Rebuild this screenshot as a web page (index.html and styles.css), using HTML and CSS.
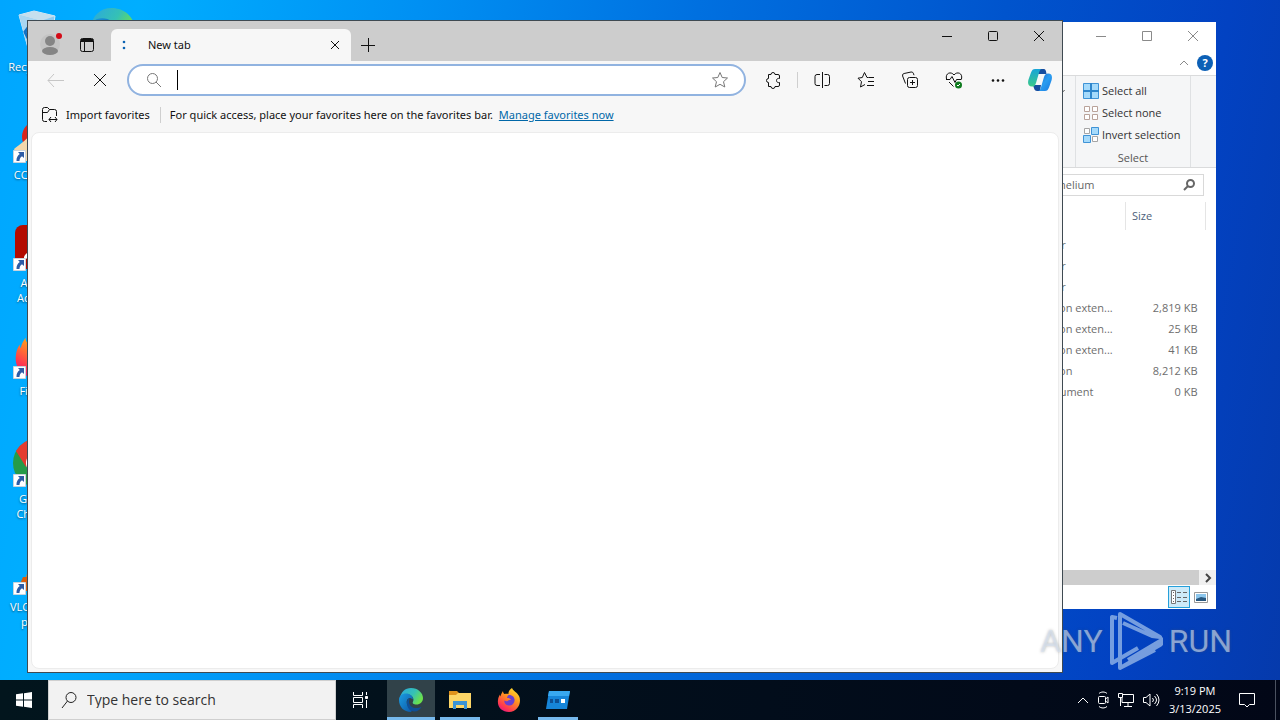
FILE: index.html
```html
<!DOCTYPE html>
<html lang="en">
  <head>
    <meta charset="UTF-8" />
    <meta name="viewport" content="width=device-width, initial-scale=1.0" />
    <title>Desktop</title>
    <link rel="stylesheet" href="styles.css">
  </head>
  <body>
    <svg class="defs" aria-hidden="true">
      <defs>
        <linearGradient id="edgeTop" x1="0" y1="0" x2="1" y2="0.5">
          <stop offset="0" stop-color="#2aa7e0" />
          <stop offset="0.6" stop-color="#35c1b5" />
          <stop offset="1" stop-color="#6be14c" />
        </linearGradient>
        <linearGradient id="edgeBlue" x1="0" y1="0" x2="1" y2="1">
          <stop offset="0" stop-color="#1b9de2" />
          <stop offset="1" stop-color="#0c56a5" />
        </linearGradient>
        <linearGradient id="fox" x1="0.8" y1="0" x2="0.2" y2="1">
          <stop offset="0" stop-color="#ffe22e" />
          <stop offset="0.4" stop-color="#ff9420" />
          <stop offset="0.8" stop-color="#ff3750" />
          <stop offset="1" stop-color="#e31587" />
        </linearGradient>
        <linearGradient id="copA" x1="0" y1="0" x2="0" y2="1">
          <stop offset="0" stop-color="#18a5d8" />
          <stop offset="1" stop-color="#3cc98a" />
        </linearGradient>
        <linearGradient id="copB" x1="0" y1="0" x2="1" y2="1">
          <stop offset="0" stop-color="#1d5fc9" />
          <stop offset="0.5" stop-color="#2a9df0" />
          <stop offset="1" stop-color="#1878e0" />
        </linearGradient>
        <symbol id="edge" viewBox="0 0 24 24">
          <path fill="url(#edgeTop)" d="M1 10C2 4 6 0 12 0c7 0 12 5 12 10 0 4-3 6.500-6.500 6.500-3 0-4.500-1.200-3.500-2.800C16 10 12 6 7.500 6 4.500 6 2 7.500 1 10z" />
          <path fill="url(#edgeBlue)" d="M0 12c0-4 3-6.500 7-6.500 4 0 7 2.500 7 6-1-1-2.500-1.500-3.500-1.500C6 11 6.500 19 14 21.500c-.800.900-1.400 1.500-2 2.500C5 24 0 19 0 12z" />
          <path fill="#0f4f96" d="M10.500 10C6 12 7.500 23.500 15.500 23.500c3 0 5.500-1.800 7-4.500-6 2.500-12 .500-12.500-5 0-1.500.500-3 .500-4z" />
        </symbol>
        <symbol id="firefox" viewBox="0 0 24 24">
          <path fill="url(#fox)" d="M15 0c1 3 5 4 7 8 3 6-1 16-10 16C5 24 0 19 1 12c.300-2.500 1-4 2-5.500 0 1 .200 1.500.500 2C4 6 5 4.500 6 3c0 1.500.500 2.300 1.500 3 1.500-.500 3-.500 4 0C11 4 13 1 15 0z" />
          <path fill="#6a3fd0" d="M12 7c4 0 6 3 5.500 6-.500 3-3 5-6 4.500-3-.400-4.700-3-4-5 1 1 2.500 1 3.500.200 1-.800 2-1 3-1-1-1.500-2.500-1.700-4-1.700C10.500 8 11 7 12 7z" />
        </symbol>
        <symbol id="shortcut" viewBox="0 0 13 13">
          <path fill="#fff" stroke="#c9d3dc" d="M.500.500h12v12H.500z" />
          <path fill="#2d5ca6" d="M5 2h6v6L9 6.200C7 7.500 6.500 9 6.500 11H3.500C3.300 8 4.500 5.500 6.800 4z" />
        </symbol>
      </defs>
    </svg>

    <main class="desktop">
      <div class="shortcuts">
        <div class="shortcut">
          <svg class="shortcut-icon" viewBox="0 0 48 48">
            <path fill="#8ecbf0" stroke="#d6ecf8" d="M6 8l15-4 21 5-5 33-22-1z" />
            <path fill="#c5dfee" d="M6 8l15-4 21 5-14 5z" />
            <path fill="#a9d6f1" d="M6 8l9 34 13-28z" />
            <path fill="none" stroke="#1271c4" stroke-width="3" d="M17 18l-5 7 3 6M15 31h8" />
          </svg>
          <span>Recycle Bin</span>
        </div>
        <div class="shortcut">
          <svg class="shortcut-icon" viewBox="0 0 48 48">
            <circle cx="26" cy="22" r="17" fill="#d8261c" />
            <path fill="#f2d8ac" d="M1 34c6-5 10-7 16-14l12 14-10 12H6z" />
            <use href="#shortcut" y="35" width="13" height="13" />
          </svg>
          <span>CCleaner</span>
        </div>
        <div class="shortcut">
          <svg class="shortcut-icon" viewBox="0 0 48 48">
            <rect x="2" y="2" width="44" height="44" rx="8" fill="#b30b00" />
            <path fill="none" stroke="#fff" stroke-width="3" d="M13 36c-3-4 8-8 13-9s12 3 8 5-12-9-11-19" />
            <use href="#shortcut" y="35" width="13" height="13" />
          </svg>
          <span>Adobe Acrobat</span>
        </div>
        <div class="shortcut">
          <svg class="shortcut-icon" viewBox="0 0 48 48">
            <use href="#firefox" x="1" y="1" width="46" height="46" />
            <use href="#shortcut" y="35" width="13" height="13" />
          </svg>
          <span>Firefox</span>
        </div>
        <div class="shortcut">
          <svg class="shortcut-icon" viewBox="0 0 48 48">
            <circle cx="24" cy="24" r="24" fill="#259b48" />
            <path fill="#e33b2e" d="M3 12A24 24 0 0 1 45 12H24L13 28z" />
            <circle cx="24" cy="24" r="11" fill="#fff" />
            <circle cx="24" cy="24" r="8" fill="#3f7fe8" />
            <use href="#shortcut" y="35" width="13" height="13" />
          </svg>
          <span>Google Chrome</span>
        </div>
        <div class="shortcut">
          <svg class="shortcut-icon" viewBox="0 0 48 48">
            <path fill="#f07c10" d="M21 3h6l11 37H10z" />
            <path fill="#d95d0c" d="M10 30h28l6 14H4z" />
            <use href="#shortcut" y="35" width="13" height="13" />
          </svg>
          <span>VLC media player</span>
        </div>
        <div class="shortcut">
          <svg class="shortcut-icon" viewBox="0 0 48 48"><use href="#edge" x="2" y="1" width="45" height="45" /></svg>
        </div>
        <div class="shortcut">
          <svg class="shortcut-icon" viewBox="0 0 48 48">
            <path fill="#f6f6f6" d="M8 4h23l9 9v33H8z" />
            <path fill="#d0d4d8" d="M31 4l9 9h-9z" />
          </svg>
        </div>
      </div>

      <section class="window explorer">
        <div class="explorer-title">
          <button aria-label="Minimize"><svg width="12" height="12" viewBox="0 0 12 12"><path d="M1 6.500h10" /></svg></button>
          <button aria-label="Maximize"><svg width="12" height="12" viewBox="0 0 12 12"><path d="M1.500 1.500h9v9h-9z" /></svg></button>
          <button aria-label="Close"><svg width="12" height="12" viewBox="0 0 12 12"><path d="M1 1l10 10M11 1L1 11" /></svg></button>
        </div>
        <div class="explorer-menu">
          <button aria-label="Collapse ribbon"><svg width="10" height="8" viewBox="0 0 10 8"><path d="M1 6l4-4 4 4" /></svg></button>
          <button class="help" aria-label="Help">?</button>
        </div>
        <div class="ribbon">
          <svg class="ribbon-arrow" width="6" height="4" viewBox="0 0 6 4"><path d="M0 0h6L3 3z" /></svg>
          <div class="ribbon-group">
            <button>
              <svg width="16" height="16" viewBox="0 0 16 16"><path fill="#a5dafb" stroke="#3f93d6" d="M.500.500h15v15H.500z" /><path stroke="#2f86cc" stroke-width="2" d="M8 0v16M0 8h16" /></svg>
              Select all
            </button>
            <button>
              <svg width="16" height="16" viewBox="0 0 16 16"><path fill="#fff" stroke="#b9a39a" d="M1.500 1.500h5v5h-5zM9.500 1.500h5v5h-5zM1.500 9.500h5v5h-5zM9.500 9.500h5v5h-5z" /></svg>
              Select none
            </button>
            <button>
              <svg width="16" height="16" viewBox="0 0 16 16"><path fill="#fff" stroke="#a5a5a5" d="M1.500 1.500h5v5h-5zM9.500 9.500h5v5h-5z" /><path fill="#a5dafb" stroke="#3f93d6" d="M8.500.500h7v7h-7zM.500 8.500h7v7h-7z" /></svg>
              Invert selection
            </button>
            <p>Select</p>
          </div>
        </div>
        <div class="explorer-address">
          <label class="explorer-search">
            <input type="text" value="helium" aria-label="Search folder">
            <svg width="12" height="12" viewBox="0 0 12 12"><circle cx="7.500" cy="4.500" r="3.500" /><path d="M5 7L1 11" /></svg>
          </label>
        </div>
        <div class="explorer-files">
          <table>
            <thead>
              <tr><th>Type</th><th>Size</th></tr>
            </thead>
            <tbody>
              <tr><td>File folder</td><td></td></tr>
              <tr><td>File folder</td><td></td></tr>
              <tr><td>File folder</td><td></td></tr>
              <tr><td>Application exten...</td><td>2,819 KB</td></tr>
              <tr><td>Application exten...</td><td>25 KB</td></tr>
              <tr><td>Application exten...</td><td>41 KB</td></tr>
              <tr><td>Application</td><td>8,212 KB</td></tr>
              <tr><td>Text Document</td><td>0 KB</td></tr>
            </tbody>
          </table>
        </div>
        <div class="scrollbar">
          <button aria-label="Scroll right"><svg width="8" height="10" viewBox="0 0 8 10"><path d="M2 1l4 4-4 4" /></svg></button>
        </div>
        <div class="explorer-status">
          <button class="active" aria-label="Details view">
            <svg width="16" height="14" viewBox="0 0 16 14"><path fill="#fff" stroke="#777" d="M.500.500h4v13h-4z" /><path stroke="#666" stroke-dasharray="4 2" d="M6 2.500h10M6 7.500h10M6 11.500h10" /><path stroke="#666" stroke-dasharray="1 2" d="M2.500 2v10" /></svg>
          </button>
          <button aria-label="Thumbnail view">
            <svg width="14" height="11" viewBox="0 0 14 11"><path fill="#fff" stroke="#999" d="M.500.500h13v10H.500z" /><g stroke="none"><path fill="#8cc6ec" d="M2 2h10v7H2z" /><path fill="#28577e" d="M2 7l5-2 5 1v3H2z" /></g></svg>
          </button>
        </div>
      </section>

      <section class="window browser">
        <div class="tabstrip">
          <button class="profile" aria-label="Profile">
            <svg width="22" height="22" viewBox="0 0 22 22"><circle cx="10" cy="11" r="10" fill="#c4c4c4" /><circle cx="10" cy="8" r="5" fill="#858585" /><ellipse cx="10" cy="18" rx="8" ry="4" fill="#858585" /><circle cx="19" cy="3" r="3" fill="#d40a16" /></svg>
          </button>
          <button class="tab-actions" aria-label="Tab actions">
            <svg width="16" height="16" viewBox="0 0 16 16"><rect x="1.500" y="1.500" width="13" height="13" rx="2" /><path d="M2 3.500h12" stroke-width="3" /><path d="M5.500 5v9" /></svg>
          </button>
          <div class="tab">
            <svg class="tab-spinner" width="4" height="10" viewBox="0 0 4 10"><circle cx="2" cy="2" r="1.300" /><circle cx="2" cy="8" r="1.300" /></svg>
            <span>New tab</span>
            <button aria-label="Close tab"><svg width="10" height="10" viewBox="0 0 10 10"><path d="M1 1l8 8M9 1L1 9" /></svg></button>
          </div>
          <button class="new-tab" aria-label="New tab"><svg width="14" height="14" viewBox="0 0 14 14"><path d="M7.500 0v14M0 7.500h14" /></svg></button>
          <div class="window-controls">
            <button aria-label="Minimize"><svg width="12" height="12" viewBox="0 0 12 12"><path d="M1 6.500h10" /></svg></button>
            <button aria-label="Maximize"><svg width="12" height="12" viewBox="0 0 12 12"><rect x="1.500" y="1.500" width="9" height="9" rx="1" /></svg></button>
            <button aria-label="Close"><svg width="12" height="12" viewBox="0 0 12 12"><path d="M1 1l10 10M11 1L1 11" /></svg></button>
          </div>
        </div>

        <div class="toolbar">
          <button class="disabled" aria-label="Back"><svg width="18" height="14" viewBox="0 0 18 14"><path d="M17 7.500H1M7 1L1 7.500 7 14" /></svg></button>
          <button aria-label="Stop"><svg width="14" height="14" viewBox="0 0 14 14"><path d="M1 1l12 12M13 1L1 13" /></svg></button>
          <div class="urlbar">
            <svg class="grey" width="16" height="16" viewBox="0 0 16 16"><circle cx="6.500" cy="6.500" r="5" /><path d="M10 10l5 5" /></svg>
            <span class="caret"></span>
            <input type="text" aria-label="Address bar">
            <svg class="grey" width="18" height="18" viewBox="0 0 18 18"><path d="M9 1.500l2.200 5 5.300.500-4 3.700 1.300 5.300L9 13.300 4.200 16l1.300-5.300-4-3.700 5.300-.500z" /></svg>
          </div>
          <button aria-label="Extensions"><svg width="18" height="18" viewBox="0 0 18 18"><path d="M4.500 3.500h2.500a2 2 0 0 1 4 0h3q1.500 0 1.500 1.500v2.500c-4-1-4 5 0 4V14q0 1.500-1.500 1.500h-3a2 2 0 0 1-4 0H4.500v-4a2 2 0 1 1 0-4z" /></svg></button>
          <span class="divider"></span>
          <button aria-label="Split screen"><svg width="18" height="18" viewBox="0 0 18 18"><path d="M9.500 1v16M7 3.500H4a2 2 0 0 0-2 2v7a2 2 0 0 0 2 2h3M11.500 3.500h3a2 2 0 0 1 2 2v7a2 2 0 0 1-2 2h-3" /></svg></button>
          <button aria-label="Favorites"><svg width="18" height="18" viewBox="0 0 18 18"><path d="M11.500 6.500H10l-2.500-5-2.200 5L1 7.200l3.500 3.500-1 5.300 4.500-2.500M11.500 6.500H17M11 10.500h6M10 14.500h7" /></svg></button>
          <button aria-label="Collections"><svg width="18" height="18" viewBox="0 0 18 18"><rect x="6.500" y="6.500" width="10" height="10" rx="2" /><path d="M11.500 9v5M9 11.500h5M4.500 12.500L1.600 5a2 2 0 0 1 1.500-2.500l7-1.500a2 2 0 0 1 2.200 1.200l.700 2" /></svg></button>
          <button aria-label="Browser essentials"><svg width="18" height="18" viewBox="0 0 18 18"><path d="M1.500 8C0 2 6 0 9 4c3-4 9-2 7.500 4M1 8.500h4l2-3 3 6 1.500-3h5M4 11l4.500 4.500" /><circle cx="13.500" cy="14" r="3.500" class="badge" /><path class="check" d="M12 14l1 1 2-2" /></svg></button>
          <button aria-label="Settings and more"><svg width="18" height="18" viewBox="0 0 18 18"><g fill="#111" stroke="none"><circle cx="4" cy="9.500" r="1.300" /><circle cx="9" cy="9.500" r="1.300" /><circle cx="14" cy="9.500" r="1.300" /></g></svg></button>
          <button class="copilot" aria-label="Copilot">
            <svg width="24" height="24" viewBox="0 0 24 24"><g stroke="none"><path fill="#174d9f" d="M9 1h6c3 0 3 2 3.500 5H10zM5 17h8l-1 6H9c-2.500 0-3-3-4-6z" /><path fill="url(#copA)" d="M7 1h7c-2 0-2.500 2-3.500 5.500L8 15c-1 3-2 3.500-4 3.500-4 0-4.500-3-3.500-7L3 4.500C4 2 5 1 7 1z" /><path fill="url(#copB)" d="M10 23c2 0 2.500-2 3.500-5.500L16 9c1-3 2-3.500 4-3.500 4 0 4.500 3 3.500 7L21 19.500c-1 2.500-2 3.500-4 3.500z" /></g></svg>
          </button>
        </div>

        <div class="favorites">
          <button>
            <svg width="18" height="18" viewBox="0 0 18 18"><path d="M6 15.500H3.500a2 2 0 0 1-2-2v-10a2 2 0 0 1 2-2h3l2 2h5a2 2 0 0 1 2 2V10M1.500 6.500h5l2-3M8 13.500h8M10 11l-2 2.500 2 2.500M14 11l2 2.500-2 2.500" /></svg>
            Import favorites
          </button>
          <span class="divider"></span>
          <p>For quick access, place your favorites here on the favorites bar.</p>
          <a href="#">Manage favorites now</a>
        </div>
        <div class="page"></div>
      </section>

      <div class="watermark">
        <span>ANY</span>
        <svg width="54" height="62" viewBox="0 0 54 62"><path d="M8 8L3 7v46l26-15M3 53V10M11 44V4l40 23-8-1L14 13M11 4v54l40-23c3-2 3-5 0-7M11 58l35-18M19 50l32-19" /></svg>
        <span>RUN</span>
      </div>
    </main>

    <footer class="taskbar">
      <button class="start" aria-label="Start"><svg width="16" height="16" viewBox="0 0 16 16"><path fill="#fff" d="M0 2.300L7 1.300v6.200H0zM8 1.200L16 0v7.500H8zM0 8.500h7v6.200l-7-1zM8 8.500h8V16l-8-1.200z" /></svg></button>
      <label class="search">
        <svg width="16" height="18" viewBox="0 0 16 18"><circle cx="10" cy="6.500" r="5" /><path d="M6.500 10L1 17" /></svg>
        <input type="text" placeholder="Type here to search" aria-label="Search">
      </label>
      <button class="task" aria-label="Task view"><svg width="18" height="18" viewBox="0 0 18 18" fill="none" stroke="#fff"><path d="M2.500 1v3.500h9V1M2.500 17v-3.500h9V17M2.500 6.500h9v5h-9zM15.500 1v3M15.500 9v8" /><path fill="#fff" d="M14.500 5.500h2v2h-2z" /></svg></button>
      <button class="task open focused" aria-label="Microsoft Edge"><svg width="24" height="24"><use href="#edge" /></svg></button>
      <button class="task open" aria-label="File Explorer"><svg width="22" height="20" viewBox="0 0 22 20"><path fill="#e0931c" d="M0 1h8l2 2h12v4H0z" /><path fill="#fdd667" d="M0 5h7l2-2h13v15H0z" /><path fill="#3b94d6" d="M4 19v-8h14v8h-3v-4H7v4z" /></svg></button>
      <button class="task" aria-label="Firefox"><svg width="24" height="24"><use href="#firefox" /></svg></button>
      <button class="task open" aria-label="Sandbox app"><svg width="24" height="20" viewBox="0 0 24 20"><path fill="#1685d9" d="M3 1h21l-3 18H0z" /><path fill="#38a8f0" d="M3 1h21l-1 5H2z" /><path fill="#0d4f94" d="M4 9h3v4H4zM9 9h4v4H9z" /><path fill="#fff" d="M15 9h4v4h-4z" /></svg></button>
      <div class="tray">
        <svg width="12" height="8" viewBox="0 0 12 8"><path d="M1 7l5-5 5 5" /></svg>
        <svg width="14" height="18" viewBox="0 0 14 18"><rect x="2.500" y="5.500" width="7" height="7" rx="1" /><path d="M9.500 8l2.500-2v6l-2.500-2M3 2.500C5 .500 9 .500 11 2.500M3 15.500c2 2 6 2 8 0" /></svg>
        <svg width="18" height="16" viewBox="0 0 18 16"><path d="M6 2.500h10.500v8H5V6M11 11v3M7 14.500h8M1.500 1.500h4v4h-4zM3.500 6v8" /></svg>
        <svg width="18" height="16" viewBox="0 0 18 16"><path d="M1.500 5.500H4L8 2v12L4 10.500H1.500zM10.500 6q2 2 0 4M12.500 4q4 4 0 8M14.500 2q5 6 0 12" /></svg>
        <div class="clock">
          <span>9:19 PM</span>
          <span>3/13/2025</span>
        </div>
        <svg class="action-center" width="16" height="18" viewBox="0 0 16 18"><path d="M.500 2.500h15v11h-5L8 16l-2.500-2.500h-5z" /></svg>
      </div>
    </footer>
  </body>
</html>
```
FILE: styles.css
```css
* {
  margin: 0;
  padding: 0;
  box-sizing: border-box;
}
body {
  font-family: "Open Sans", sans-serif;
  font-size: 11px;
  line-height: 16px;
  color: #111;
  height: 100vh;
  display: flex;
  flex-direction: column;
  overflow: hidden;
}

button,
input {
  font: inherit;
  color: inherit;
  background: none;
  border: none;
  outline: none;
}

button {
  display: flex;
  align-items: center;
  justify-content: center;
}

svg {
  flex-shrink: 0;
}

.defs {
  position: absolute;
  width: 0;
  height: 0;
}

.desktop {
  position: relative;
  flex: 1;
  overflow: hidden;
  background: linear-gradient(
    100deg,
    #00a6ff 0%,
    #00aeff 10%,
    #0090f3 30%,
    #0070e0 50%,
    #0054cd 72%,
    #0242c2 88%,
    #053aac 100%
  );
}

.shortcuts {
  display: grid;
  grid-template-rows: repeat(6, 108px);
  grid-auto-columns: 74px;
  grid-auto-flow: column;
}

.shortcut {
  display: flex;
  flex-direction: column;
  align-items: center;
  gap: 4px;
  padding: 7px 2px 0;
  line-height: 15px;
  color: white;
  text-align: center;
  text-shadow: 0 1px 2px rgba(0, 0, 0, 0.5);
}

.shortcut-icon {
  width: 48px;
  height: 48px;
}

.window {
  position: absolute;
  display: flex;
  flex-direction: column;
}

/* file explorer */
.explorer {
  top: 22px;
  right: 64px;
  bottom: 71px;
  left: 50%;
  background: white;
}

.explorer svg {
  fill: none;
  stroke: #8a8a8a;
}

.explorer-title {
  display: flex;
  justify-content: flex-end;
  height: 28px;
}

.explorer-title button {
  width: 46px;
}

.explorer-menu {
  display: flex;
  align-items: center;
  justify-content: flex-end;
  gap: 8px;
  height: 25px;
  padding-right: 3px;
}

.explorer .help {
  width: 16px;
  height: 16px;
  border-radius: 50%;
  background: #0c60b6;
  color: white;
  font-weight: bold;
}

.ribbon {
  display: flex;
  justify-content: flex-end;
  padding-right: 25px;
  height: 93px;
  background: #f5f6f7;
  border-top: 1px solid #dadbdc;
  border-bottom: 1px solid #dadbdc;
}

.ribbon-arrow {
  margin: 14px 10px;
}

.ribbon-group {
  width: 116px;
  padding: 4px 7px;
  border-left: 1px solid #dfe1e3;
  border-right: 1px solid #dfe1e3;
}

.ribbon-group button {
  gap: 3px;
  height: 22px;
  color: #333;
  white-space: nowrap;
}

.ribbon-group p {
  text-align: center;
  line-height: 24px;
  color: #555;
}

.explorer-address {
  padding: 6px 12px 6px 0;
}

.explorer-search {
  display: flex;
  align-items: center;
  width: 154px;
  height: 22px;
  margin-left: auto;
  padding: 0 8px;
  border: 1px solid #d9d9d9;
  color: #666;
}

.explorer-search input {
  flex: 1;
  min-width: 0;
}

.explorer .explorer-search svg {
  stroke: #666;
  stroke-width: 2;
}

.explorer-files {
  flex: 1;
  padding-right: 10px;
}

.explorer-files table {
  width: 197px;
  margin-left: auto;
  table-layout: fixed;
  border-collapse: collapse;
  color: #6d6d6d;
}

.explorer-files th {
  height: 28px;
  padding-left: 6px;
  font-weight: normal;
  text-align: left;
  color: #4c607a;
  border-right: 1px solid #e5e5e5;
}

.explorer-files thead::after {
  content: "";
  display: block;
  height: 4px;
}

.explorer-files td {
  height: 21px;
  padding: 0 8px 0 6px;
  white-space: nowrap;
}

.explorer-files th:last-child {
  width: 80px;
}

.explorer-files td:last-child {
  text-align: right;
}

.scrollbar {
  display: flex;
  justify-content: flex-end;
  height: 15px;
  background: #cdcdcd;
}

.scrollbar button {
  width: 17px;
  background: #f0f0f0;
}

.explorer .scrollbar svg {
  stroke: #444;
  stroke-width: 2;
}

.explorer-status {
  display: flex;
  justify-content: flex-end;
  height: 24px;
  padding: 1px 4px 1px 0;
}

.explorer-status button {
  width: 22px;
}

.explorer-status .active {
  background: #cdeaf8;
  border: 1px solid #26a0da;
}

/* browser */
.browser {
  top: 20px;
  right: 217px;
  bottom: 7px;
  left: 27px;
  font-family: "Noto Sans", sans-serif;
  background: #f7f7f7;
  border: 1px solid #3f4a52;
}

.browser svg {
  fill: none;
  stroke: #111;
}

.tabstrip {
  display: flex;
  height: 40px;
  background: #cdcdcd;
}

.profile {
  width: 42px;
  padding: 5px 0 0 4px;
}

.browser .profile svg {
  stroke: none;
}

.tab-actions {
  width: 34px;
  padding-top: 8px;
}

.tab {
  display: flex;
  align-items: center;
  width: 240px;
  margin: 8px 0 0 7px;
  padding-left: 11px;
  background: #f7f7f7;
  border-radius: 6px 6px 0 0;
}

.tab span {
  flex: 1;
  padding-left: 22px;
}

.tab button {
  width: 32px;
  height: 32px;
}

.browser .tab-spinner {
  fill: #0b63b3;
  stroke: none;
}

.new-tab {
  width: 34px;
  padding-top: 8px;
}

.window-controls {
  display: flex;
  height: 30px;
  margin-left: auto;
}

.window-controls button {
  width: 46px;
}

.toolbar {
  display: flex;
  align-items: center;
  height: 38px;
  padding: 0 2px 0 6px;
}

.toolbar button {
  width: 44px;
  height: 32px;
}

.toolbar .divider {
  margin: 0 2px;
}

.browser .disabled svg {
  stroke: #c6c6c6;
}

.browser .badge {
  fill: #0f7b1f;
  stroke: none;
}

.browser .check {
  stroke: white;
}

.toolbar .copilot {
  width: 40px;
}

.urlbar {
  display: flex;
  flex: 1;
  align-items: center;
  height: 32px;
  margin: 0 5px;
  padding: 0 15px 0 17px;
  background: white;
  border: 2px solid #91b3e0;
  border-radius: 16px;
}

.urlbar input {
  flex: 1;
  min-width: 0;
  height: 24px;
}

.browser .grey {
  stroke: #777;
}

.caret {
  width: 1px;
  height: 20px;
  margin-left: 15px;
  background: black;
}

.divider {
  width: 1px;
  height: 16px;
  background: #cfcfcf;
}

.favorites {
  display: flex;
  align-items: center;
  height: 32px;
  padding-left: 13px;
  white-space: nowrap;
}

.favorites button {
  gap: 7px;
  padding-right: 10px;
}

.favorites p {
  padding: 0 6px 0 9px;
}

.favorites a {
  color: #0067a8;
}

.page {
  flex: 1;
  margin: 1px 3px 3px;
  background: white;
  border: 1px solid #ececec;
  border-radius: 8px;
}

.watermark {
  position: absolute;
  right: 48px;
  bottom: 8px;
  display: flex;
  align-items: center;
  gap: 6px;
  font-family: Roboto, sans-serif;
  font-size: 32px;
  line-height: 62px;
  color: rgba(215, 228, 245, 0.6);
  text-shadow: 0 0 3px rgba(90, 90, 90, 0.4);
}

.watermark svg {
  fill: none;
  stroke: rgba(180, 207, 240, 0.65);
  stroke-width: 4;
  stroke-linejoin: round;
}

/* taskbar */
.taskbar {
  display: flex;
  height: 40px;
  background: linear-gradient(90deg, #02151d, #020d1b 60%, #020717);
  color: white;
}

.start {
  width: 48px;
}

.search {
  display: flex;
  align-items: center;
  gap: 10px;
  width: 288px;
  padding-left: 12px;
  background: #f2f2f2;
  border: 1px solid #cfcfcf;
  color: #333;
  font-size: 14px;
}

.search svg {
  fill: none;
  stroke: #222;
}

.search input {
  flex: 1;
  min-width: 0;
}

.search input::placeholder {
  color: #333;
}

.task {
  width: 40px;
  margin-right: 9px;
}

.task:nth-of-type(2) {
  width: 48px;
  margin-right: 3px;
}

.task.open {
  border-bottom: 3px solid #76b9ed;
  padding-top: 3px;
}

.task.focused {
  width: 48px;
  margin-right: 5px;
  background: #314249;
}

.tray {
  display: flex;
  align-items: center;
  gap: 7px;
  margin-left: auto;
  padding-right: 4px;
}

.tray svg {
  fill: none;
  stroke: white;
}

.clock {
  display: flex;
  flex-direction: column;
  align-items: center;
  padding-left: 2px;
  line-height: 18px;
}

.tray .action-center {
  margin: 0 13px 0 11px;
}

.tray::after {
  content: "";
  width: 1px;
  height: 40px;
  background: #4b5260;
}
```
